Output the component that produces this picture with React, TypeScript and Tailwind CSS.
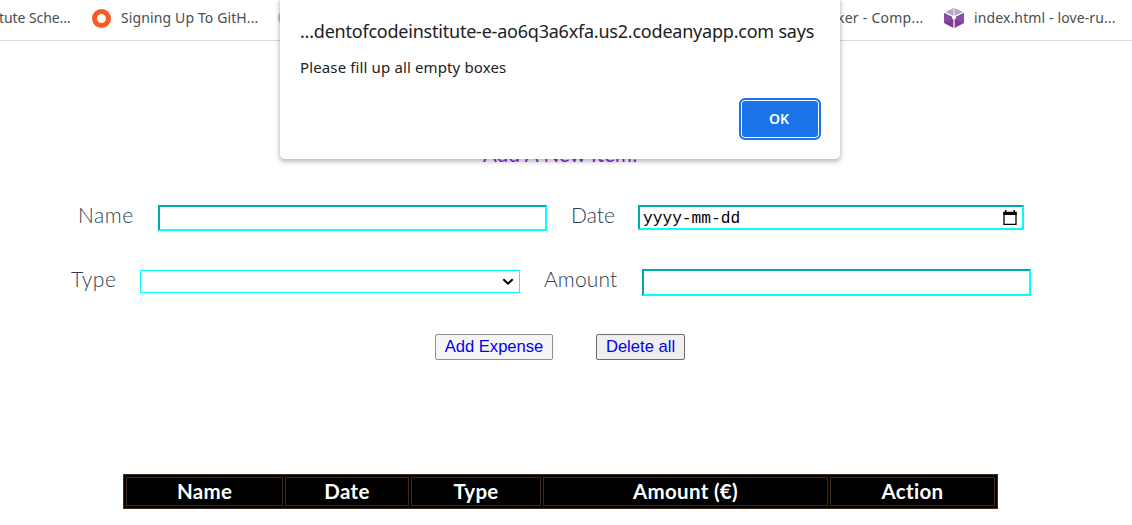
import React from "react";

const fieldLabel =
  "-mt-[2px] shrink-0 whitespace-nowrap font-['Lato',sans-serif] text-[21px] leading-6 font-light text-[#2c3e50]";
const inset =
  "shrink-0 border-2 border-t-[#00a9a9] border-l-[#00a9a9] border-r-[#00ffff] border-b-[#00ffff] bg-white";

function Bookmarks() {
  return (
    <div className="flex h-[41px] shrink-0 border-b border-[#dadce0] font-['Noto_Sans',sans-serif] text-[14px] leading-9 text-[#4a4d51]">
      <div className="flex w-[92px] shrink-0 overflow-hidden">
        <span className="-ml-px whitespace-nowrap tracking-[-0.08px]">tute Sche...</span>
      </div>
      <div className="flex w-[186px] shrink-0">
        <span className="mt-[9px] h-[19px] w-[19px] shrink-0 rounded-full border-[5.5px] border-[#ff5722] bg-white" />
        <span className="ml-[10px] whitespace-nowrap tracking-[0.12px]">Signing Up To GitH...</span>
      </div>
      <span className="mt-[9px] h-[18px] w-[18px] shrink-0 rounded-full bg-[#bdc1c6]" />
      <span className="ml-[541px] w-[107px] shrink-0 whitespace-nowrap tracking-[0.25px]">ker - Comp...</span>
      <svg className="mt-2 h-5 w-5 shrink-0" viewBox="0 0 20 20">
        <path d="M9.6 0 L9.6 8 L1 4Z M10.4 0 L10.4 8 L19 4Z" fill="#bda2cc" />
        <path d="M0 5 L9.4 9.6 V20 L0 15Z" fill="#7d3c98" />
        <path d="M20 5 L10.6 9.6 V20 L20 15Z" fill="#7d3c98" />
        <path d="M0 5 L9.4 9.6 V11 L0 15Z M20 5 L10.6 9.6 V11 L20 15Z" fill="#884ea0" />
        <circle cx="10" cy="9.5" r="2" fill="white" />
      </svg>
      <span className="ml-[10px] whitespace-nowrap tracking-[0.12px]">index.html - love-ru...</span>
    </div>
  );
}

function Dialog() {
  return (
    <div
      role="dialog"
      className="absolute top-0 left-[280px] flex h-[159px] w-[560px] flex-col rounded-b-[5px] bg-white pt-[19px] pr-[19px] pl-5 font-['Noto_Sans',sans-serif] text-[#202124] shadow-[0_2px_4px_1px_rgba(0,0,0,0.25)]"
    >
      <h2 className="h-9 whitespace-nowrap text-[18px] leading-6 tracking-[-0.22px]">
        ...dentofcodeinstitute-e-ao6q3a6xfa.us2.codeanyapp.com says
      </h2>
      <p className="h-[43px] whitespace-nowrap text-[15px] leading-6 tracking-[0.13px]">
        Please fill up all empty boxes
      </p>
      <button className="h-[42px] w-[82px] self-end rounded-[6px] border-2 border-[#1a73e8] bg-[#1a73e8] pr-[2px] pb-[2px] text-[14px] font-semibold text-white shadow-[inset_0_0_0_1px_white]">
        OK
      </button>
    </div>
  );
}

const columns = [
  { label: "Name", width: "w-[157px]" },
  { label: "Date", width: "w-[124px]" },
  { label: "Type", width: "w-[130px]" },
  { label: "Amount (€)", width: "w-[285px]" },
  { label: "Action", width: "w-[165px]" },
];

export default function App() {
  return (
    <div className="relative flex h-[525px] w-[1132px] flex-col overflow-hidden bg-white">
      <Bookmarks />
      <h1 className="mt-[98px] ml-[483px] h-[30px] w-[154px] whitespace-nowrap font-['Lato',sans-serif] text-[20.5px] leading-[30px] tracking-[0.15px] text-[#9a1fee]">
        Add A New Item:
      </h1>

      <div className="mt-9 flex h-[26px] items-start pl-[78px]">
        <label className={`${fieldLabel} w-[80px] tracking-[0.6px]`}>Name</label>
        <div className={`${inset} h-[26px] w-[389px]`} />
        <label className={`${fieldLabel} ml-6 w-[67px] tracking-[0px]`}>Date</label>
        <div
          className={`${inset} flex h-[25px] w-[386px] items-center justify-between pr-[5px] pl-[3px] font-['Liberation_Mono',monospace] text-[16.2px] leading-5 text-black`}
        >
          <span className="pt-[2px]">yyyy-mm-dd</span>
          <svg className="h-4 w-[14px]" viewBox="0 0 14 16">
            <path d="M1 2.5H13V14.3H1Z" fill="none" stroke="black" strokeWidth="1.3" />
            <path d="M.4 2H13.6V5H.4Z M2 0H3.5V3H2Z M10.5 0H12V3H10.5Z" fill="black" />
          </svg>
        </div>
      </div>

      <div className="mt-[38px] flex h-[27px] items-start pl-[71px]">
        <label className={`${fieldLabel} w-[69px] tracking-[0.5px]`}>Type</label>
        <div className="mt-px flex h-[23px] w-[380px] shrink-0 items-center justify-end border border-[#00ffff] pr-[5px]">
          <svg className="h-[9px] w-3" viewBox="0 0 12 9">
            <path d="M1.3 2.2 L6 6.7 L10.7 2.2" fill="none" stroke="black" strokeWidth="2" />
          </svg>
        </div>
        <label className={`${fieldLabel} ml-6 w-[98px] tracking-[0.15px]`}>Amount</label>
        <div className={`${inset} h-[27px] w-[389px]`} />
      </div>

      <div className="mt-[38px] flex h-[26px] gap-[43px] pl-[435px] font-['Liberation_Sans',sans-serif] text-[16.6px] leading-[23px] text-[#0000ee]">
        <button className="w-[118px] whitespace-nowrap rounded-[2px] border border-[#8f8f8f] bg-[#f5f5f5] pb-px">
          Add Expense
        </button>
        <button className="w-[89px] whitespace-nowrap rounded-[2px] border border-[#6b6b6b] bg-[#efefef] pb-px">
          Delete all
        </button>
      </div>

      <div className="mt-[114px] ml-[123px] flex h-[35px] w-[875px] shrink-0 gap-[2px] border border-[#3c2b1a] bg-black p-[2px] font-['Lato',sans-serif] text-[20.5px] leading-[26px] font-bold tracking-[0.3px] text-white [font-variant-ligatures:none]">
        {columns.map((c) => (
          <div
            key={c.label}
            className={`${c.width} h-[29px] shrink-0 whitespace-nowrap border border-[#3c2b1a] text-center`}
          >
            {c.label}
          </div>
        ))}
      </div>

      <Dialog />
    </div>
  );
}
